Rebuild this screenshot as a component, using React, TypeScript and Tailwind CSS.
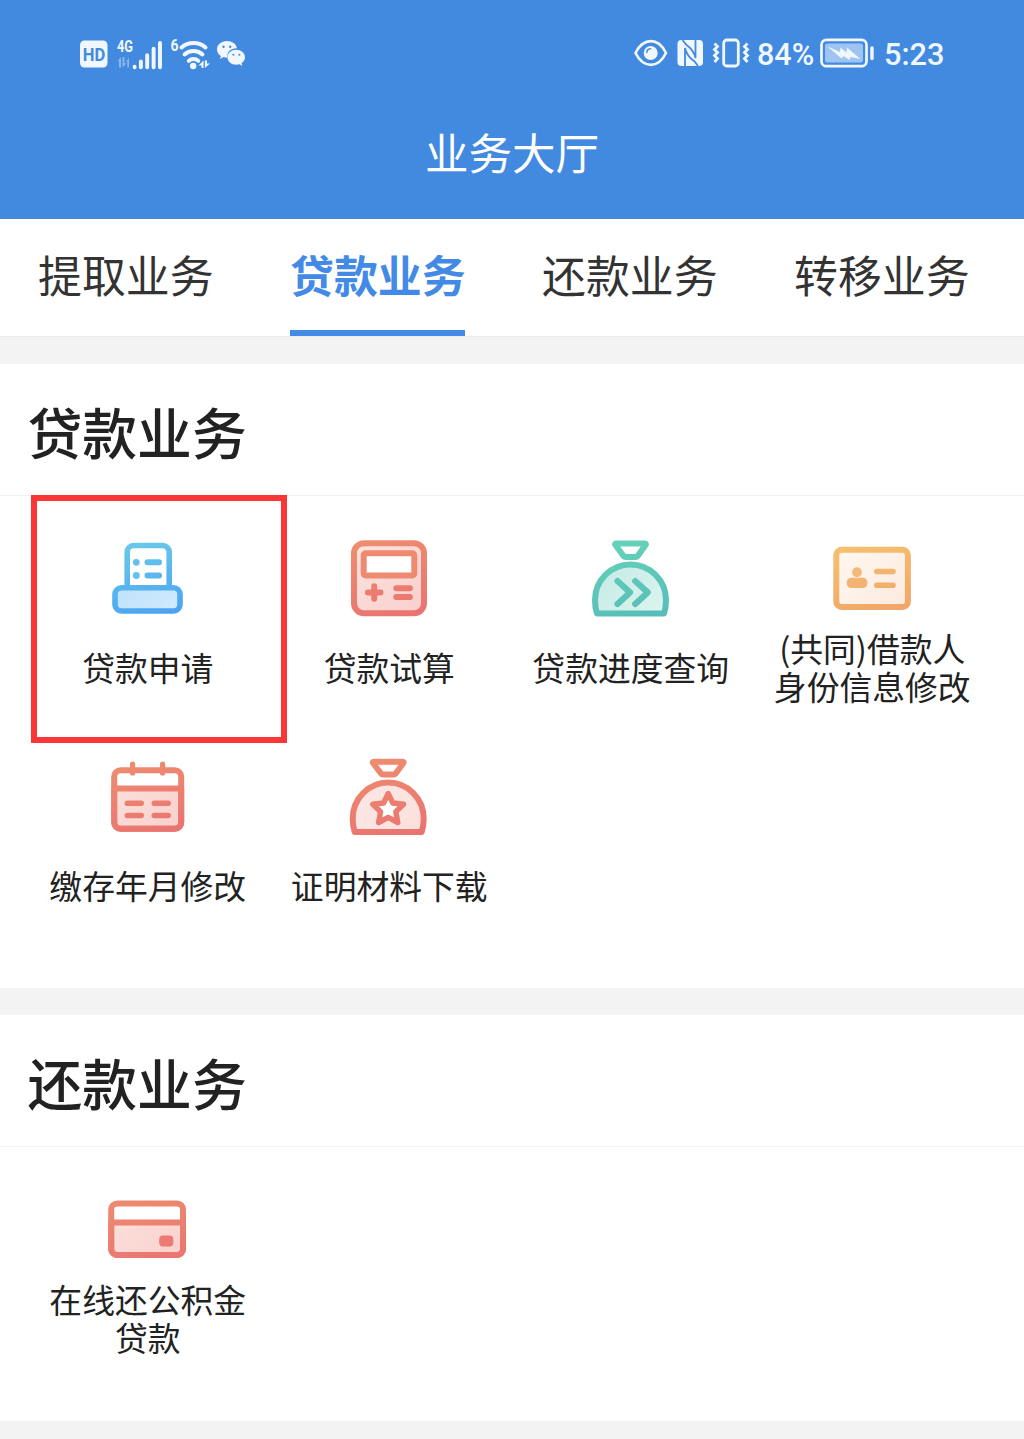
import { type ReactNode } from "react";

type Service = {
    label: string[];
    icon: ReactNode;
    highlighted?: boolean;
};

type IconBaseProps = {
    id: string;
    from: string;
    to: string;
    fillFrom: string;
    fillTo: string;
    children: ReactNode;
};

function IconBase({ id, from, to, fillFrom, fillTo, children }: IconBaseProps) {
    return (
        <svg viewBox="0 0 80 80" className="h-20 w-20" fill="none" stroke={`url(#${id})`} strokeWidth="6" strokeLinecap="round" strokeLinejoin="round">
            <defs>
                <linearGradient id={id} gradientUnits="userSpaceOnUse" x1="25" y1="0" x2="45" y2="80">
                    <stop stopColor={from} />
                    <stop offset="1" stopColor={to} />
                </linearGradient>
                <linearGradient id={`${id}-fill`} gradientUnits="userSpaceOnUse" x1="10" y1="20" x2="70" y2="80">
                    <stop stopColor={fillFrom} />
                    <stop offset="1" stopColor={fillTo} />
                </linearGradient>
            </defs>
            {children}
        </svg>
    );
}

const coral = { from: "#ee8d70", to: "#ea7470", fillFrom: "#fbe0dc", fillTo: "#f9cfcc" };

const PrinterIcon = () => (
    <IconBase id="printer" from="#6bcbe9" to="#4aa3f3" fillFrom="#b5e0fb" fillTo="#d4eafd">
        <path d="M19.2 49.5V14a6.5 6.5 0 0 1 6.5-6.5h29a6.5 6.5 0 0 1 6.5 6.5v35.5" strokeWidth="5.6" />
        <rect x="7" y="49.8" width="65" height="23.2" rx="6.5" fill="url(#printer-fill)" strokeWidth="5.6" />
        <path d="M39.5 24.3h11.5M39.5 37.6h11.5" />
        <circle cx="28.3" cy="24.3" r="3.4" fill="#62bff4" stroke="none" />
        <circle cx="28.3" cy="37.5" r="3.4" fill="#62bff4" stroke="none" />
    </IconBase>
);

const CalculatorIcon = () => (
    <IconBase id="calculator" {...coral}>
        <rect x="5" y="5.2" width="70" height="70" rx="10" fill="url(#calculator-fill)" />
        <rect x="14.7" y="15.2" width="50.6" height="22.2" rx="2" fill="#fff" stroke="#ee8a70" />
        <path d="M18.9 54.5h12.6M25.2 48.2v12.6M47.3 50.3h13.6M47.3 59.1h13.6" />
    </IconBase>
);

const PurseIcon = () => (
    <IconBase id="purse" from="#65d3b8" to="#58bdb9" fillFrom="#c5e9e4" fillTo="#dcf5ef">
        <path d="M25.3 5.4h28.4q1.9 0 .8 1.6l-7.6 10.8q-.8 1.1-2 1.1H34.3q-1.2 0-2-1.1L24.5 7q-1.1-1.6.8-1.6Z" />
        <path d="M6 75.4c-1.4-4-2-8.4-2-13.4a35.5 35.5 0 0 1 71 0c0 5-.6 9.4-2 13.4Z" fill="url(#purse-fill)" />
        <path d="m26.5 43 12.5 11.4L26.5 66M44.2 43l12.5 11.4L44.2 66" strokeWidth="6.2" />
    </IconBase>
);

const StarPurseIcon = () => (
    <IconBase id="star-purse" {...coral} fillFrom="#fbe8e5" fillTo="#fbe0dd">
        <path d="M25 5.7h28.4q1.9 0 .8 1.6l-7.5 10.2q-.8 1.1-2 1.1H34q-1.2 0-2-1.1L24.2 7.3Q23.1 5.7 25 5.7Z" />
        <path d="M5.7 76c-1.4-4-2-8.4-2-13.4a35.5 36 0 0 1 71 0c0 5-.6 9.4-2 13.4Z" fill="url(#star-purse-fill)" />
        <path d="m39.2 37.5 4.6 9.5 10.8 1.3-7.8 7.4 2 10.8-9.6-5.1-9.6 5.1 2-10.8-7.8-7.4L34.6 47Z" fill="#fff" strokeWidth="5.4" />
    </IconBase>
);

const IdCardIcon = () => (
    <IconBase id="id-card" from="#f6c26f" to="#f0a568" fillFrom="#fff6ee" fillTo="#fbe9df">
        <rect x="4.3" y="11.8" width="71.6" height="57.2" rx="5.5" fill="url(#id-card-fill)" />
        <circle cx="25" cy="34.2" r="4.9" fill="#f3b97b" stroke="none" />
        <rect x="14.8" y="39.7" width="20.6" height="10.4" rx="4.5" fill="#f3b372" stroke="none" />
        <path d="M44.8 33.5h16.2M44.8 47.2h16.2" strokeWidth="5.6" />
    </IconBase>
);

const CalendarIcon = () => (
    <IconBase id="calendar" {...coral}>
        <path d="M6.2 32.4h67v33.9a6.5 6.5 0 0 1-6.5 6.5h-54a6.5 6.5 0 0 1-6.5-6.5Z" fill="url(#calendar-fill)" />
        <rect x="6.2" y="14.2" width="67" height="58.6" rx="6.5" />
        <path d="M24.6 8v9M54.6 8v9" strokeWidth="5.2" />
        <path d="M19.4 47.3h13.8M46.3 47.3h13.8M19.4 59.5h13.8M46.3 59.5h13.8" strokeWidth="5.6" />
    </IconBase>
);

const BankCardIcon = () => (
    <IconBase id="bank-card" {...coral}>
        <path d="M3.2 33.5H75V60a6 6 0 0 1-6 6H9.2a6 6 0 0 1-6-6Z" fill="url(#bank-card-fill)" />
        <rect x="3.2" y="14.4" width="71.8" height="51.6" rx="6" />
        <rect x="51.2" y="46.6" width="14.1" height="10.8" rx="3.6" fill="#ed7a73" stroke="none" />
    </IconBase>
);

const tabs = ["提取业务", "贷款业务", "还款业务", "转移业务"];

const loanServices: Service[] = [
    { label: ["贷款申请"], icon: <PrinterIcon />, highlighted: true },
    { label: ["贷款试算"], icon: <CalculatorIcon /> },
    { label: ["贷款进度查询"], icon: <PurseIcon /> },
    { label: ["(共同)借款人", "身份信息修改"], icon: <IdCardIcon /> },
    { label: ["缴存年月修改"], icon: <CalendarIcon /> },
    { label: ["证明材料下载"], icon: <StarPurseIcon /> },
];

const repaymentServices: Service[] = [
    { label: ["在线还公积金", "贷款"], icon: <BankCardIcon /> },
];

function StatusBar() {
    return (
        <div className="flex h-[107px] items-center justify-between px-20 font-[Roboto,sans-serif] text-[#f1f7fe]">
            <div className="flex items-center">
                <svg width="28" height="28" viewBox="0 0 28 28">
                    <rect y="0.5" width="27.5" height="27" rx="4.5" fill="currentColor" />
                    <text x="2.7" y="20.5" fontSize="18.5" fontWeight="700" fill="#428ae0" textLength="22.5" lengthAdjust="spacingAndGlyphs">HD</text>
                </svg>
                <svg width="48" height="34" viewBox="0 0 48 34" className="ml-2 overflow-visible" fill="currentColor">
                    <text x="1" y="15" fontSize="17" fontWeight="700" textLength="16" lengthAdjust="spacingAndGlyphs">4G</text>
                    <path d="M1.5 24.5 5 20v10.500H3v-6ZM6.5 20h2v6.200h2L6.500 30.500ZM10 24.500l3-4v10h-1.700v-6Z" opacity=".4" />
                    <path d="M18.6 29.8v.4M24.9 24.500v5.700M31.200 18.200v12M37.600 11.800v18.400M44 6v24.200" stroke="currentColor" strokeWidth="3.9" strokeLinecap="round" />
                </svg>
                <svg width="42" height="34" viewBox="0 0 42 34" className="ml-[6px] overflow-visible" fill="currentColor">
                    <text x="0.5" y="13.5" fontSize="16" fontWeight="700" textLength="8" lengthAdjust="spacingAndGlyphs">6</text>
                    <path d="M11.5 10.5C18 4.500 29 4.500 35.500 10.500M14.500 17.500c5-4.600 13-4.600 18 0M18.800 23.800c2.500-2.500 7-2.500 9.500 0" fill="none" stroke="currentColor" strokeWidth="4" strokeLinecap="round" />
                    <circle cx="23.2" cy="29" r="3.2" />
                    <path d="m28.5 28.5 5-5v7.500h-2v-2.500ZM34.800 23.500v7.500l5.200-4.500h-3v-3Z" />
                </svg>
                <svg width="31" height="28" viewBox="0 0 31 28" className="ml-[4px]">
                    <path fill="currentColor" d="M11 1C5.2 1 1 4.600 1 9.400c0 2.800 1.500 5.100 3.900 6.600L4 19l3.500-1.900c1.300.4 2.500.6 4 .5C10.500 11.500 15.500 8 21 8.300 20.200 4 16 1 11 1Z" />
                    <path fill="currentColor" d="M20.2 9.700c-5 0-8.700 3.300-8.700 7.500s3.700 7.500 8.700 7.500c1.200 0 2.100-.2 3.100-.5l3 1.700-.8-2.700c2.200-1.500 3.500-3.600 3.500-6 0-4.200-3.900-7.500-8.800-7.500Z" />
                    <g fill="#428ae0">
                        <circle cx="7.5" cy="6.8" r="1.2" />
                        <circle cx="14.2" cy="6.8" r="1.2" />
                        <circle cx="17.4" cy="14.7" r="1" />
                        <circle cx="23.4" cy="14.7" r="1" />
                    </g>
                </svg>
            </div>

            <div className="flex items-center">
                <svg width="34" height="28" viewBox="0 0 34 28">
                    <path d="M1.5 14C5.500 6 10.500 2.200 17 2.200S28 6 32 14c-4 8-8.500 11.800-15 11.800S5.500 22 1.500 14Z" fill="none" stroke="currentColor" strokeWidth="2.7" strokeLinejoin="round" />
                    <circle cx="16.7" cy="14" r="7" fill="currentColor" />
                    <path d="M12.8 13.5q.2-3.300 3.700-3.700" fill="none" stroke="#428ae0" strokeWidth="1.5" strokeLinecap="round" />
                </svg>
                <svg width="27" height="28" viewBox="0 0 27 28" className="ml-[9px]">
                    <rect x="0.5" y="1" width="25.5" height="26" rx="4" fill="currentColor" />
                    <path d="M5.5 1 9 5.500M8 27V9c1 5 4 9.500 9.500 13.500L21 27M18.500 1v18c-1-5-4-9.500-9.500-13.500" fill="none" stroke="#428ae0" strokeWidth="1.8" />
                </svg>
                <svg width="38" height="30" viewBox="0 0 38 30" className="ml-[8px]" fill="none" stroke="currentColor" strokeWidth="2.8">
                    <rect x="11.7" y="2" width="14.6" height="26" rx="3" />
                    <path d="m2.5 5.500 3 3-3 3 3 3-3 3 3 3-3 3.500M35.500 5.500l-3 3 3 3-3 3 3 3-3 3 3 3.500" />
                </svg>
                <span className="ml-[7px] w-[57px] pt-[3px] text-[30.5px] leading-none font-medium">84%</span>
                <svg width="55" height="30" viewBox="0 0 55 30" className="ml-[6px]">
                    <rect x="1.5" y="1.8" width="45" height="26.4" rx="5" fill="none" stroke="currentColor" strokeWidth="2.7" />
                    <rect x="5" y="5.5" width="38" height="19" rx="2.5" fill="#9ec5f2" />
                    <path d="m7.5 8.500 12.500 5.500.5-4.500 6 5 .5-5L40.500 21l-10-2-1 3-6-4-2 2.500Z" fill="currentColor" />
                    <path d="M52 10v10.5" stroke="currentColor" strokeWidth="3.4" strokeLinecap="round" />
                </svg>
                <span className="ml-[9px] w-[60px] pt-[3px] text-[30.7px] leading-none font-medium">5:23</span>
            </div>
        </div>
    );
}

function ServiceItem({ service }: { service: Service }) {
    return (
        <div className="relative flex h-[218px] flex-col items-center pt-[42px]">
            {service.icon}
            <div className="mt-[11px] flex h-[76px] flex-col items-center justify-center text-[32.8px] leading-[38px] whitespace-nowrap text-[#222]">
                {service.label.map((line) => (
                    <span key={line}>{line}</span>
                ))}
            </div>
            {service.highlighted && (
                <div className="absolute -top-px left-1 h-[248px] w-[256px] border-[6px] border-[#fb3637]" />
            )}
        </div>
    );
}

function ServiceSection({ title, services }: { title: string; services: Service[] }) {
    return (
        <section className="bg-white pb-14">
            <h2 className="flex h-[132px] items-center border-b border-[#f2f2f2] pt-px pl-[27.5px] text-[54.8px] leading-none font-medium text-[#222]">
                {title}
            </h2>
            <div className="grid w-[993px] grid-cols-4 pl-[27px]">
                {services.map((service) => (
                    <ServiceItem key={service.label[0]} service={service} />
                ))}
            </div>
        </section>
    );
}

function App() {
    return (
        <div className="flex h-[1439px] w-[1024px] flex-col overflow-hidden bg-[#f3f3f3] font-['Noto_Sans_CJK_SC',sans-serif]">
            <header className="h-[219px] shrink-0 bg-[#428ae0]">
                <StatusBar />
                <h1 className="flex h-[90px] items-center justify-center text-[43.5px] leading-none text-white">业务大厅</h1>
            </header>

            <nav className="flex h-[118px] shrink-0 gap-[77px] border-b border-[#eaeaea] bg-white pl-[38px] text-[43.9px]">
                {tabs.map((tab, i) => (
                    <div
                        key={tab}
                        className={
                            i === 1
                                ? "w-[175px] shrink-0 border-b-[6px] border-[#438ae6] leading-[111px] font-bold whitespace-nowrap text-[#438ae6]"
                                : "w-[175px] shrink-0 leading-[111px] whitespace-nowrap text-[#333]"
                        }
                    >
                        {tab}
                    </div>
                ))}
            </nav>

            <main className="mt-[27px] flex flex-col gap-[27px]">
                <ServiceSection title="贷款业务" services={loanServices} />
                <ServiceSection title="还款业务" services={repaymentServices} />
            </main>
        </div>
    );
}

export default App;
